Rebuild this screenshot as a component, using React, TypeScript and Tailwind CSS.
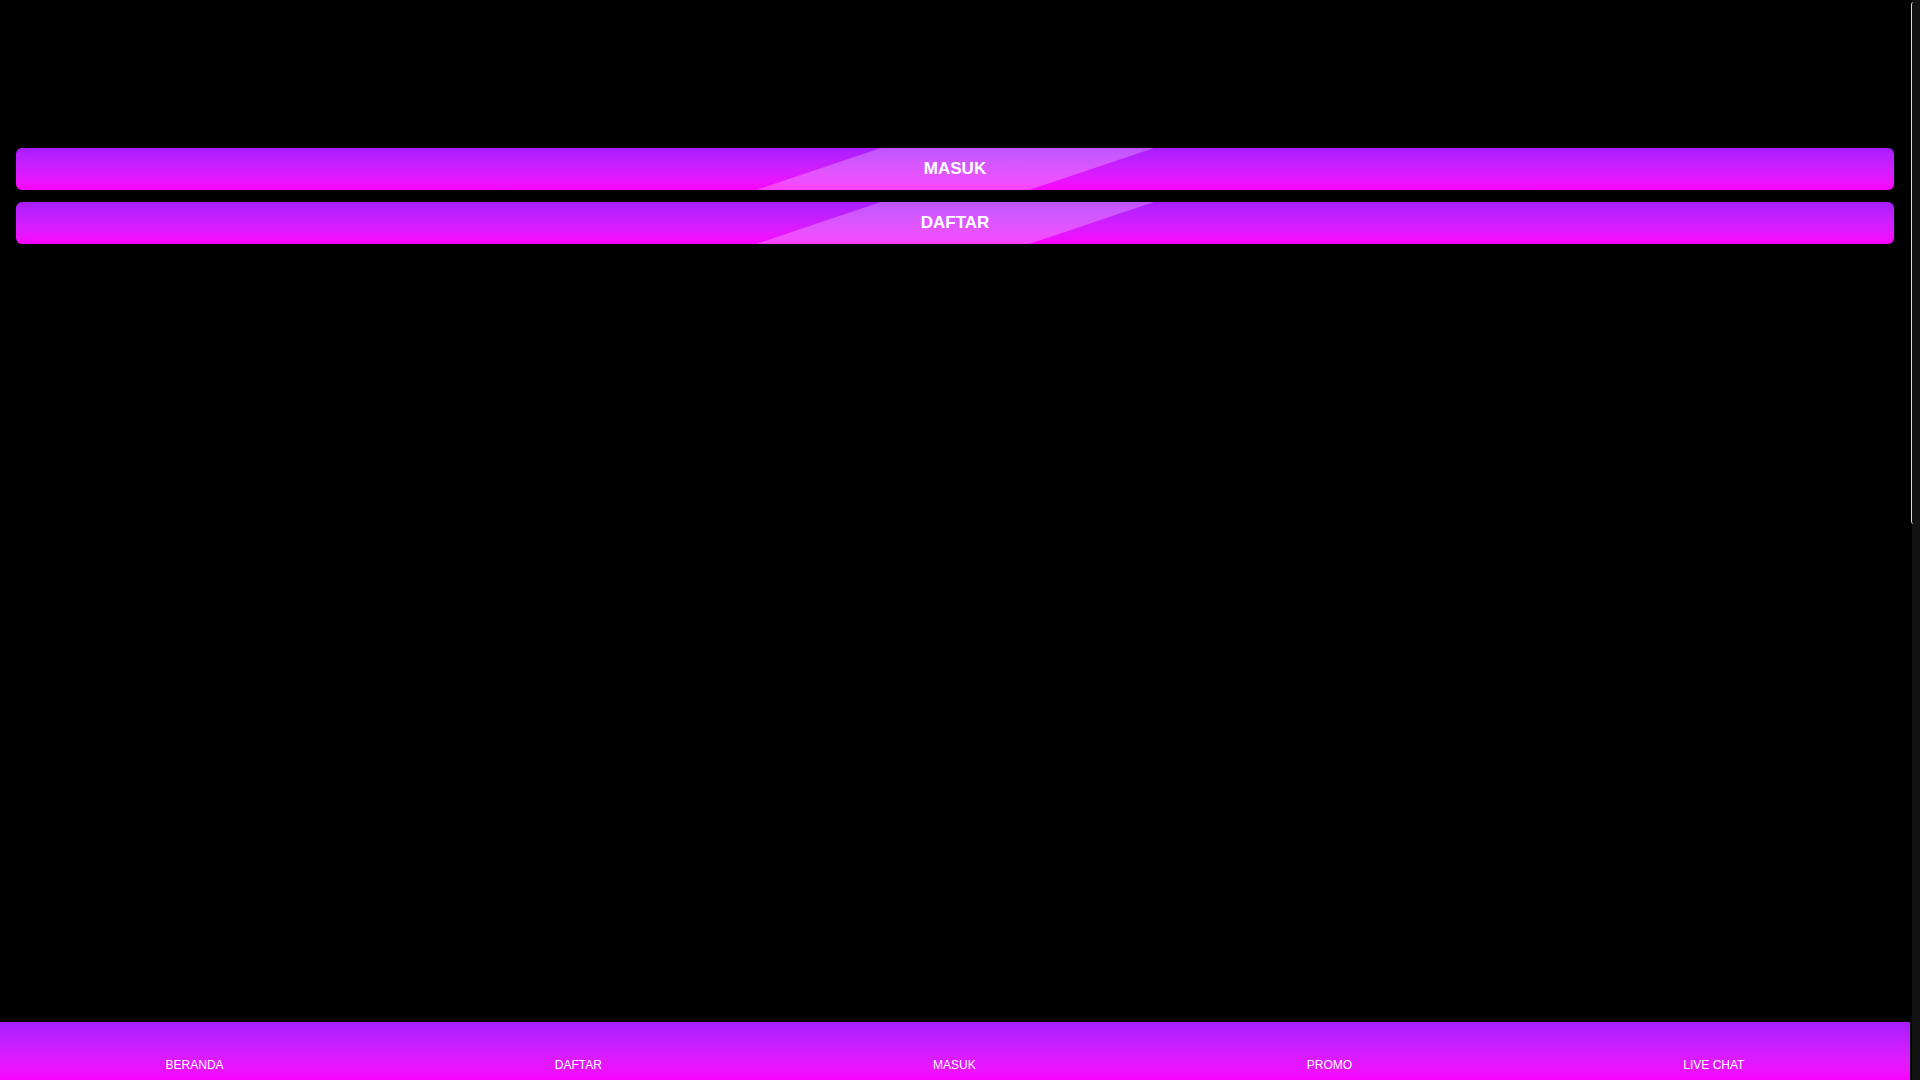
import React from "react";

function GlossButton({ label }: { label: string }) {
  return (
    <a
      href="#"
      className="relative flex h-[42px] w-full items-center justify-center overflow-hidden rounded-[6px] bg-gradient-to-b from-[#a81dff] to-[#fa00ff] text-[17px] font-bold text-white no-underline"
    >
      <span className="pointer-events-none absolute inset-y-0 left-1/2 w-[398px] -translate-x-1/2 bg-white/25 [clip-path:polygon(125px_0,100%_0,calc(100%-125px)_100%,0_100%)]" />
      <span className="relative">{label}</span>
    </a>
  );
}

export default function App() {
  const nav = ["BERANDA", "DAFTAR", "MASUK", "PROMO", "LIVE CHAT"];
  return (
    <div
      className="flex h-screen w-full overflow-hidden bg-black"
      style={{ fontFamily: '"Liberation Sans", Arial, sans-serif' }}
    >
      <div className="relative flex min-w-0 flex-1 flex-col">
        <div className="h-[148px] shrink-0" />
        <div className="flex flex-col gap-3 px-4">
          <GlossButton label="MASUK" />
          <GlossButton label="DAFTAR" />
        </div>
        <div className="flex-1" />
        <nav className="flex h-[58px] shrink-0 bg-gradient-to-b from-[#a81dff] to-[#fa00ff]">
          {nav.map((n) => (
            <a
              key={n}
              href="#"
              className="flex flex-auto flex-col items-center justify-end pb-[8px] text-[12px] leading-[14px] text-white no-underline"
            >
              {n}
            </a>
          ))}
        </nav>
      </div>
      <div className="flex w-[10px] shrink-0 flex-col bg-[linear-gradient(to_right,#000_2px,#121212_2px)] pl-px">
        <div className="mt-[2px] h-[522px] rounded-l-[3px] border-l border-[#dcdcdc]" />
      </div>
    </div>
  );
}
